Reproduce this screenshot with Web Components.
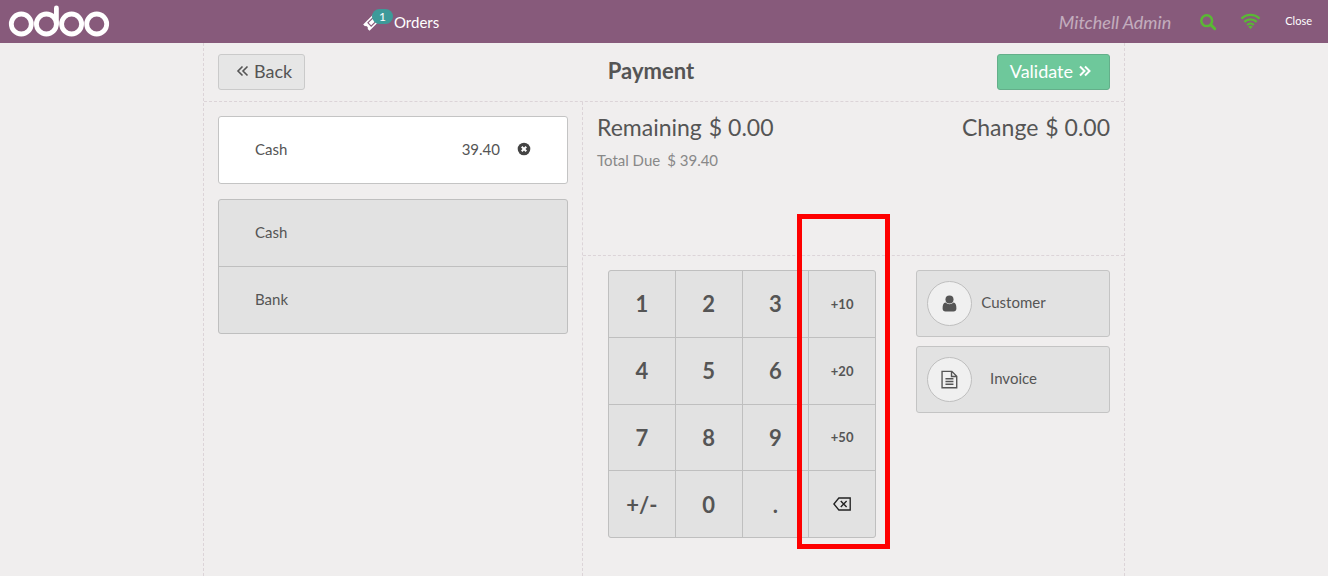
<!DOCTYPE html>
<html lang="en">
<head>
<meta charset="utf-8">
<meta name="viewport" content="width=device-width, initial-scale=1">
<title>Payment</title>
<style>
html { height: 100%; }
body { margin: 0; min-height: 100%; display: flex; font-family: Lato, "Liberation Sans", sans-serif; color: #555; background: #f0eeee; }
pos-app { flex: 1; }
</style>
</head>
<body>
<pos-app></pos-app>
<script>
const define = (name, html, setup) => {
  const template = document.createElement('template');
  template.innerHTML = html;
  customElements.define(name, class extends HTMLElement {
    constructor() {
      super();
      this.attachShadow({ mode: 'open' }).append(template.content.cloneNode(true));
    }
    connectedCallback() { if (setup) setup(this, this.shadowRoot); }
  });
};

const ICONS = {
  back: '<path d="M8.500 3.500 4 8l4.500 4.500M13.500 3.500 9 8l4.500 4.500" fill="none" stroke="currentColor" stroke-width="1.600"/>',
  next: '<path d="M3 3.500 7.500 8 3 12.500M8 3.500 12.500 8 8 12.500" fill="none" stroke="currentColor" stroke-width="2"/>',
  search: '<circle cx="6.700" cy="6.700" r="5.400" fill="none" stroke="currentColor" stroke-width="2.500"/><path d="m10.900 10.900 3.900 3.900" stroke="currentColor" stroke-width="2.900" stroke-linecap="round"/>',
  wifi: '<g fill="none" stroke="currentColor" stroke-width="1.900"><path d="M.4 5.600a10.800 10.800 0 0 1 15.200 0"/><path d="M2.800 8.300a7.400 7.400 0 0 1 10.400 0"/><path d="M5.200 10.900a4 4 0 0 1 5.600 0"/></g><path d="m8 14.300-1.900-1.900a2.800 2.800 0 0 1 3.800 0z" fill="currentColor"/>',
  remove: '<circle cx="8" cy="8" r="7.200" fill="currentColor"/><path d="m5.400 5.400 5.200 5.200m0-5.200-5.200 5.200" stroke="#fff" stroke-width="2.300"/>',
  user: '<circle cx="8" cy="4.300" r="3.800" fill="currentColor"/><path d="M4.200 7.100C2.300 7.300 1.500 9.400 1.500 12.600c0 1.700 1.100 2.900 2.700 2.900h7.600c1.600 0 2.700-1.200 2.700-2.900 0-3.200-.8-5.300-2.700-5.500a5.500 5.500 0 0 1-7.600 0z" fill="currentColor"/>',
  file: '<path d="M1 .3h9.200l4.600 4.600v10.900H1zM9.900.3v4.900h4.900M4.200 7.300h7.500M4.200 9.900h7.500M4.200 12.500h7.500" fill="none" stroke="currentColor" stroke-width="1.300"/>',
  erase: '<path d="M5.200 2.700h10.100v10.600H5.200L.8 8zM6.900 5.300l5.200 5.400m0-5.400-5.200 5.400" fill="none" stroke="#222" stroke-width="1.200"/>',
  ticket: '<g transform="rotate(-45 8 8)"><path d="M0 3.500h16v2.600a2 2 0 0 0 0 3.800v2.600H0V9.900a2 2 0 0 0 0-3.800z" fill="currentColor"/><path d="M4.500 5.700h7v4.600h-7z" fill="none" stroke="#875a7b" stroke-width="1.100"/></g>'
};

define('pos-icon', `
<style>
:host { display: inline-flex; width: 16px; height: 16px; flex: none; }
svg { width: 100%; height: 100%; overflow: visible; }
</style>
<svg viewBox="0 0 16 16" aria-hidden="true"></svg>`,
(el, root) => { root.querySelector('svg').innerHTML = ICONS[el.getAttribute('name')]; });

define('pos-navbar', `
<style>
:host { display: flex; align-items: center; height: 43px; background: #875a7b; color: #fff; }
.brand { flex: 0 0 364px; display: flex; }
.brand svg { margin-left: 8px; }
button { font: inherit; color: inherit; background: none; border: 0; padding: 0; cursor: pointer; display: flex; align-items: center; }
.orders { position: relative; font-size: 15px; line-height: 20px; gap: 14px; }
.badge { position: absolute; left: 8px; top: -3px; width: 21px; height: 15px; border-radius: 8px; background: #3d9a99; font-size: 12px; line-height: 15px; text-align: center; }
.tools { margin-left: auto; display: flex; align-items: center; padding-right: 16px; }
.user { font-size: 18px; font-style: italic; opacity: .5; margin-right: 29px; }
.search, .net { color: #5ab934; }
.search { margin-right: 25px; }
.net { margin-right: 25px; }
.net pos-icon { width: 19px; height: 19px; }
.close { font-size: 11px; padding-bottom: 2px; }
</style>
<div class="brand"><svg width="102" height="36" viewBox="0 0 102 36" role="img" aria-label="Odoo">
<g fill="none" stroke="#fff" stroke-width="4.800"><circle cx="13.300" cy="20" r="10"/><circle cx="38.400" cy="20" r="10"/><circle cx="63.600" cy="20" r="10"/><circle cx="88.700" cy="20" r="10"/><path d="M48.400 4V20" stroke-linecap="round"/></g></svg></div>
<button class="orders"><pos-icon name="ticket"></pos-icon><span class="badge">1</span><span>Orders</span></button>
<div class="tools">
<span class="user">Mitchell Admin</span>
<button class="search" aria-label="Search"><pos-icon name="search"></pos-icon></button>
<button class="net" aria-label="Connection status"><pos-icon name="wifi"></pos-icon></button>
<button class="close">Close</button>
</div>`);

define('pos-action', `
<style>
:host { display: block; }
button { box-sizing: border-box; height: 36px; display: flex; align-items: center; gap: 4px; padding: 0 12px 2px; font: inherit; font-size: 18px; color: #555; background: #e6e6e6; border: 1px solid #cacaca; border-radius: 3px; cursor: pointer; }
:host([primary]) button { color: #fff; background: #6ec89b; border-color: #64af8a; padding: 0 16px 2px 12px; }
:host([back]) button { padding-left: 15px; }
</style>
<button><slot></slot></button>`);

define('payment-lines', `
<style>
:host { display: block; }
.line, button.method { box-sizing: border-box; display: flex; align-items: center; width: 100%; padding: 0 36px 2px; font: inherit; font-size: 15px; color: #555; }
.line { height: 68px; background: #fff; border: 1px solid #c4c4c4; border-radius: 3px; }
.amount { margin-left: auto; margin-right: 17px; }
.remove { display: flex; padding: 0; border: 0; background: none; color: #444; cursor: pointer; }
.remove pos-icon { width: 14px; height: 14px; }
.methods { margin-top: 15px; border: 1px solid #bfbfbf; border-radius: 3px; background: #e2e2e2; }
button.method { height: 66px; border: 0; background: none; cursor: pointer; }
.methods button + button { height: 67px; border-top: 1px solid #bfbfbf; }
</style>
<div class="line"><span>Cash</span><span class="amount">39.40</span><button class="remove" aria-label="Remove payment"><pos-icon name="remove"></pos-icon></button></div>
<div class="methods"><button class="method">Cash</button><button class="method">Bank</button></div>`);

define('payment-summary', `
<style>
:host { display: flex; justify-content: space-between; box-sizing: border-box; min-height: 154px; padding: 10px 14px; border-bottom: 1px dashed #dcd4d8; }
.big { font-size: 23px; line-height: 30px; }
.due { margin-top: 8px; font-size: 15px; line-height: 20px; color: #888; }
.big, .due { display: flex; gap: 7px; }
</style>
<div><div class="big"><span>Remaining</span><span>$ 0.00</span></div><div class="due"><span>Total Due</span><span>$ 39.40</span></div></div>
<div class="big"><span>Change</span><span>$ 0.00</span></div>`);

define('pos-numpad', `
<style>
:host { display: block; position: relative; width: 268px; flex: none; }
.keys { box-sizing: border-box; height: 268px; display: grid; grid-template: repeat(4, 1fr) / repeat(4, 1fr); gap: 1px; border: 1px solid #bfbfbf; border-radius: 3px; background: #bfbfbf; overflow: hidden; }
button { display: flex; align-items: center; justify-content: center; padding: 0; border: 0; font: inherit; font-size: 22px; font-weight: 700; color: #555; background: #e2e2e2; cursor: pointer; }
.mode { font-size: 13px; }
.mode pos-icon { width: 18px; height: 18px; }
.marker { position: absolute; box-sizing: border-box; left: 189px; top: -56px; width: 93px; height: 335px; border: 5px solid #fe0000; pointer-events: none; }
</style>
<div class="keys"></div><div class="marker"></div>`,
(el, root) => {
  const keys = ['1', '2', '3', '+10', '4', '5', '6', '+20', '7', '8', '9', '+50', '+/-', '0', '.', 'erase'];
  root.querySelector('.keys').innerHTML = keys.map((key, i) => {
    const mode = i % 4 === 3 ? ' class="mode"' : '';
    return key === 'erase' ? `<button${mode} aria-label="Backspace"><pos-icon name="erase"></pos-icon></button>` : `<button${mode}>${key}</button>`;
  }).join('');
});

define('pos-option', `
<style>
:host { display: block; }
button { box-sizing: border-box; width: 100%; height: 67px; display: flex; align-items: center; padding: 0 10px; font: inherit; font-size: 15px; color: #555; background: #e2e2e2; border: 1px solid #c4c4c4; border-radius: 3px; cursor: pointer; }
.disc { box-sizing: border-box; width: 45px; height: 45px; flex: none; display: flex; align-items: center; justify-content: center; border: 1px solid #bfbfbf; border-radius: 50%; background: #f0f0f0; }
.disc pos-icon { width: 17px; height: 17px; }
.label { width: 83px; padding-bottom: 3px; text-align: center; }
</style>
<button><span class="disc"><pos-icon></pos-icon></span><span class="label"><slot></slot></span></button>`,
(el, root) => {
  const icon = document.createElement('pos-icon');
  icon.setAttribute('name', el.getAttribute('icon'));
  root.querySelector('.disc').replaceChildren(icon);
});

define('payment-screen', `
<style>
:host { display: flex; flex-direction: column; box-sizing: border-box; width: 100%; max-width: 922px; margin: 0 auto; border: 1px dashed #dcd4d8; border-width: 0 1px; }
header { display: grid; grid-template-columns: 1fr auto 1fr; align-items: center; height: 58px; padding: 0 14px; border-bottom: 1px dashed #dcd4d8; }
h1 { margin: 0 26px 2px 0; font-size: 22px; line-height: 28px; }
header pos-action[back] { justify-self: start; }
header pos-action[primary] { justify-self: end; }
main { flex: 1; display: grid; grid-template-columns: 379px 1fr; }
.left { padding: 14px; border-right: 1px dashed #dcd4d8; }
.controls { display: flex; justify-content: space-between; padding: 14px 14px 14px 25px; }
.options { width: 194px; display: flex; flex-direction: column; gap: 9px; }
</style>
<header>
<pos-action back><pos-icon name="back"></pos-icon>Back</pos-action>
<h1>Payment</h1>
<pos-action primary>Validate<pos-icon name="next"></pos-icon></pos-action>
</header>
<main>
<div class="left"><payment-lines></payment-lines></div>
<div><payment-summary></payment-summary>
<div class="controls"><pos-numpad></pos-numpad><div class="options"><pos-option icon="user">Customer</pos-option><pos-option icon="file">Invoice</pos-option></div></div></div>
</main>`);

define('pos-app', `
<style>
:host { display: flex; flex-direction: column; min-height: 100vh; }
payment-screen { flex: 1; }
</style>
<pos-navbar></pos-navbar><payment-screen></payment-screen>`);
</script>
</body>
</html>
